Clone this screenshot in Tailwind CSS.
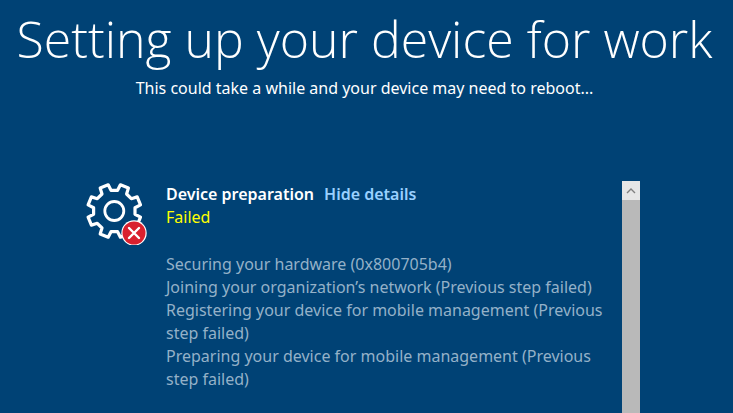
<!DOCTYPE html>
<html lang="en">
<head>
  <meta charset="utf-8" />
  <meta name="viewport" content="width=device-width, initial-scale=1" />
  <title>Setting up your device for work</title>
  <script src="https://cdn.jsdelivr.net/npm/@tailwindcss/browser@4"></script>
</head>
<body class="h-screen flex flex-col overflow-hidden bg-[#004275] text-white text-[16px] leading-[23px] font-['Noto_Sans',sans-serif]">
  <header class="pt-[7px] pr-1 text-center">
    <h1 class="font-['Open_Sans',sans-serif] font-light text-[50px] leading-[64px] whitespace-nowrap">Setting up your device for work</h1>
    <p class="mt-1.5">This could take a while and your device may need to reboot...</p>
  </header>

  <!-- Scrolling status list -->
  <main class="flex-1 flex mt-[81px] pl-[84px] pr-[93px]">
    <svg class="w-16 h-16 shrink-0" viewBox="0 0 64 64" fill="none" aria-hidden="true">
      <g transform="translate(30.3 30)" stroke="#fff" stroke-width="3.2" stroke-linejoin="round">
        <path d="M3.3-20.7L6.1-26.2 14.1-22.9 12.3-17 17-12.3 22.9-14.1 26.2-6.1 20.7-3.3V3.3L26.2 6.1 22.9 14.1 17 12.3 12.3 17 14.1 22.9 6.1 26.2 3.3 20.7H-3.3L-6.1 26.2-14.1 22.9-12.3 17-17 12.3-22.9 14.1-26.2 6.1-20.7 3.3V-3.3L-26.2-6.1-22.9-14.1-17-12.3-12.3-17-14.1-22.9-6.1-26.2-3.3-20.7z" />
        <circle r="9.5" stroke-width="2.8" />
      </g>
      <circle cx="50" cy="52" r="12.7" fill="#fff" />
      <circle cx="50" cy="52" r="11.5" fill="#d9202e" />
      <path d="M45 47l10 10M55 47l-10 10" stroke="#fff" stroke-width="2.4" stroke-linecap="round" />
    </svg>

    <section class="flex-1 pl-[18px] pr-2 pt-[2px]">
      <div class="flex gap-[10px] font-semibold">
        <h2>Device preparation</h2>
        <a href="#" class="text-[#99d0ff]">Hide details</a>
      </div>
      <p class="text-[#ffff00]">Failed</p>
      <ul class="mt-6 text-[#94b1c8]">
        <li>Securing your hardware (0x800705b4)</li>
        <li>Joining your organization’s network (Previous step failed)</li>
        <li>Registering your device for mobile management (Previous step failed)</li>
        <li>Preparing your device for mobile management (Previous step failed)</li>
      </ul>
    </section>

    <div class="w-[18px] shrink-0 bg-[#b9b9b9]">
      <button class="w-full h-[19px] flex items-center justify-center bg-[#e6e6e6]" aria-label="Scroll up">
        <svg class="w-[10px] h-[6px]" viewBox="0 0 10 6" fill="none" stroke="#808080" stroke-width="1.4"><path d="M1 5l4-4 4 4" /></svg>
      </button>
    </div>
  </main>
</body>
</html>
